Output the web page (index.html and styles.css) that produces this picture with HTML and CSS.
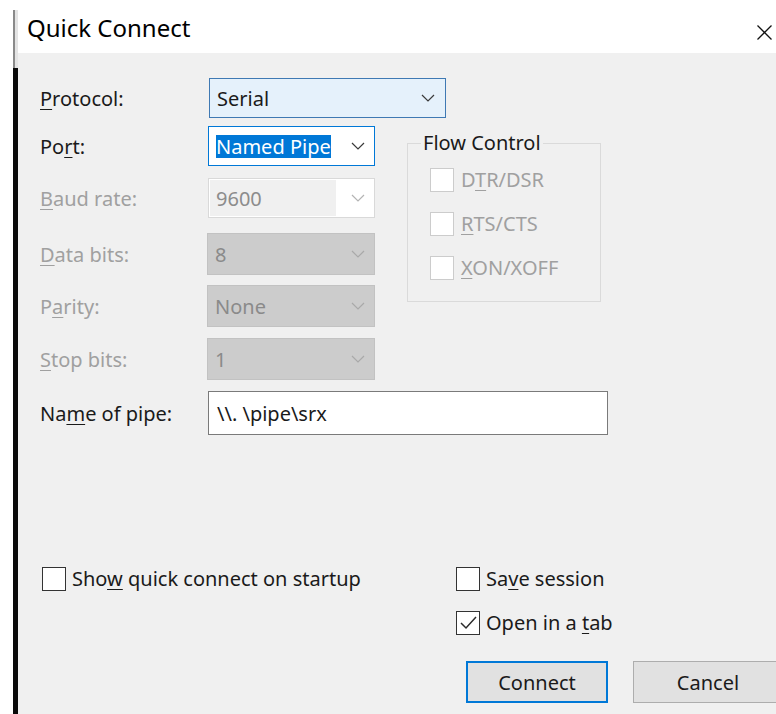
FILE: index.html
```html
<!DOCTYPE html>
<html lang="en">
<head>
<meta charset="utf-8">
<title>Quick Connect</title>
<link rel="stylesheet" href="styles.css">
</head>
<body>
<div class="screen">
  <div class="edge">
    <span class="edge-gap"></span>
    <span class="edge-line"></span>
    <span class="edge-bar"></span>
  </div>
  <div class="dialog">
    <header class="titlebar">
      <h1 class="title">Quick Connect</h1>
      <svg class="close" viewBox="0 0 15 15" aria-label="Close">
        <path d="M0.5 0.5 L14.5 14.5 M14.5 0.5 L0.5 14.5" stroke="#111" stroke-width="1.3" fill="none"/>
      </svg>
    </header>

    <main class="body">
      <div class="form">
        <div class="row">
          <span class="label"><u>P</u>rotocol:</span>
          <div class="combo hot">
            <span>Serial</span>
            <svg class="chev" viewBox="0 0 14 8"><polyline points="1,1 7,7 13,1" fill="none" stroke="#3a3a3a" stroke-width="1.2"/></svg>
          </div>
        </div>

        <div class="middle">
          <div class="rows">
            <div class="row">
              <span class="label">Po<u>r</u>t:</span>
              <div class="combo focus">
                <span class="sel">Named Pipe</span>
                <svg class="chev" viewBox="0 0 14 8"><polyline points="1,1 7,7 13,1" fill="none" stroke="#3a3a3a" stroke-width="1.2"/></svg>
              </div>
            </div>
            <div class="row r-baud">
              <span class="label off"><u>B</u>aud rate:</span>
              <div class="combo edit">
                <span class="field">9600</span>
                <svg class="chev" viewBox="0 0 14 8"><polyline points="1,1 7,7 13,1" fill="none" stroke="#b4b4b4" stroke-width="1.2"/></svg>
              </div>
            </div>
            <div class="row r-data">
              <span class="label off"><u>D</u>ata bits:</span>
              <div class="combo off">
                <span>8</span>
                <svg class="chev" viewBox="0 0 14 8"><polyline points="1,1 7,7 13,1" fill="none" stroke="#a9a9a9" stroke-width="1.2"/></svg>
              </div>
            </div>
            <div class="row r-parity">
              <span class="label off">P<u>a</u>rity:</span>
              <div class="combo off">
                <span>None</span>
                <svg class="chev" viewBox="0 0 14 8"><polyline points="1,1 7,7 13,1" fill="none" stroke="#a9a9a9" stroke-width="1.2"/></svg>
              </div>
            </div>
            <div class="row r-stop">
              <span class="label off"><u>S</u>top bits:</span>
              <div class="combo off">
                <span>1</span>
                <svg class="chev" viewBox="0 0 14 8"><polyline points="1,1 7,7 13,1" fill="none" stroke="#a9a9a9" stroke-width="1.2"/></svg>
              </div>
            </div>
          </div>

          <div class="group">
            <span class="group-title">Flow Control</span>
            <ul class="group-list">
              <li class="check off"><span class="box"></span><span>D<u>T</u>R/DSR</span></li>
              <li class="check off"><span class="box"></span><span><u>R</u>TS/CTS</span></li>
              <li class="check off"><span class="box"></span><span><u>X</u>ON/XOFF</span></li>
            </ul>
          </div>
        </div>

        <div class="row r-pipe">
          <span class="label">Na<u>m</u>e of pipe:</span>
          <div class="textbox">\\. \pipe\srx</div>
        </div>
      </div>

      <div class="options">
        <div class="check"><span class="box"></span><span>Sho<u>w</u> quick connect on startup</span></div>
        <div class="check right"><span class="box"></span><span>Sa<u>v</u>e session</span></div>
        <div class="check right">
          <span class="box">
            <svg viewBox="0 0 22 22"><polyline points="4,11 9,16 19,5" fill="none" stroke="#2b2b2b" stroke-width="1.5"/></svg>
          </span>
          <span>Open in a <u>t</u>ab</span>
        </div>
        <div class="buttons right">
          <button class="btn default">Connect</button>
          <button class="btn cancel">Cancel</button>
        </div>
      </div>
    </main>
  </div>
</div>
</body>
</html>
```

FILE: styles.css
```css
* {
  box-sizing: border-box;
}

html,
body {
  margin: 0;
  height: 100%;
  overflow: hidden;
}

body {
  background: #ffffff;
  font-family: "Noto Sans", "Open Sans", sans-serif;
  font-size: 20px;
  color: #1a1a1a;
}

u {
  text-decoration-thickness: 1px;
  text-underline-offset: 3px;
}

.screen {
  display: flex;
  width: 776px;
  height: 714px;
}

/* window edge of the app behind the dialog */
.edge {
  flex: none;
  width: 5px;
  margin-left: 13px;
  display: flex;
  flex-direction: column;
}

.edge-gap {
  height: 10px;
}

.edge-line {
  height: 58px;
  border-left: 2px solid #8a8a8a;
  background: #e4e4e4;
}

.edge-bar {
  flex: 1;
  background: #0a0a0a;
}

.dialog {
  flex: 1;
  min-width: 0;
  display: flex;
  flex-direction: column;
  overflow: hidden;
}

.titlebar {
  flex: none;
  height: 53px;
  background: #ffffff;
  display: flex;
  justify-content: space-between;
  align-items: flex-start;
  padding: 0 4px 0 9px;
}

.title {
  margin: 0;
  padding-top: 11px;
  font-size: 24px;
  font-weight: 400;
  line-height: 33px;
  color: #000000;
}

.close {
  width: 15px;
  height: 15px;
  margin-top: 25px;
}

.body {
  flex: 1;
  background: #f0f0f0;
  padding: 25px 0 0 22px;
}

/* form rows */
.row {
  display: flex;
  align-items: center;
}

.label {
  flex: none;
  width: 168px;
  color: #1a1a1a;
}

.label.off {
  color: #a0a0a0;
}

.middle {
  display: flex;
  align-items: flex-start;
  margin-top: 8px;
}

.rows {
  flex: none;
  width: 367px;
}

.r-baud {
  margin-top: 12px;
}

.r-data {
  margin-top: 15px;
}

.r-parity {
  margin-top: 10px;
}

.r-stop {
  margin-top: 11px;
}

.r-pipe {
  margin-top: 11px;
}

/* combo boxes */
.combo {
  display: flex;
  align-items: center;
  justify-content: space-between;
  width: 167px;
  height: 40px;
  border: 1px solid #7a7a7a;
  background: #ffffff;
  padding: 0 9px 0 7px;
  color: #1a1a1a;
}

.combo.hot {
  width: 237px;
  margin-left: 1px;
  background: #e5f1fb;
  border-color: #3f79b3;
  padding-right: 10px;
}

.combo.focus {
  border-color: #0078d7;
  padding-left: 7px;
}

.sel {
  background: #0078d7;
  color: #ffffff;
  line-height: 23px;
}

.combo.edit {
  border-color: #d9d9d9;
  padding: 1px 9px 1px 1px;
}

.combo.edit .field {
  display: flex;
  align-items: center;
  align-self: stretch;
  width: 126px;
  padding-left: 6px;
  background: #f0f0f0;
  color: #8c8c8c;
}

.combo.off {
  width: 168px;
  margin-left: -1px;
  height: 42px;
  background: #cccccc;
  border-color: #c2c2c2;
  color: #8a8a8a;
}

.chev {
  width: 14px;
  height: 8px;
}

.textbox {
  display: flex;
  align-items: center;
  width: 400px;
  height: 44px;
  border: 1px solid #7a7a7a;
  background: #ffffff;
  padding-left: 8px;
  color: #1a1a1a;
}

/* flow control group */
.group {
  flex: none;
  width: 194px;
  height: 159px;
  margin-top: 17px;
  border: 1px solid #dadada;
  padding-left: 22px;
}

.group-title {
  display: block;
  width: max-content;
  margin: -12px 0 0 -9px;
  padding: 0 2px;
  background: #f0f0f0;
  line-height: 22px;
  color: #1a1a1a;
}

.group-list {
  list-style: none;
  margin: 14px 0 0;
  padding: 0;
  display: flex;
  flex-direction: column;
  gap: 20px;
}

/* check boxes */
.check {
  display: flex;
  align-items: center;
  gap: 6px;
  line-height: 24px;
  color: #1a1a1a;
}

.box {
  flex: none;
  display: flex;
  width: 24px;
  height: 24px;
  border: 1px solid #333333;
  background: #ffffff;
}

.box svg {
  width: 22px;
  height: 22px;
}

.check.off {
  gap: 7px;
  color: #a0a0a0;
}

.check.off .box {
  border-color: #cccccc;
}

.options {
  display: grid;
  grid-template-columns: 414px auto;
  row-gap: 20px;
  margin-top: 132px;
  padding-left: 2px;
}

.right {
  grid-column: 2;
}

.buttons {
  display: flex;
  gap: 25px;
  margin: 6px 0 0 10px;
  white-space: nowrap;
}

.btn {
  flex: none;
  width: 142px;
  height: 42px;
  border: 1px solid #adadad;
  background: #e1e1e1;
  font-family: inherit;
  font-size: 20px;
  color: #1a1a1a;
  padding: 0;
}

.btn.default {
  border: 2px solid #0078d7;
}

.btn.cancel {
  width: 150px;
}
```
